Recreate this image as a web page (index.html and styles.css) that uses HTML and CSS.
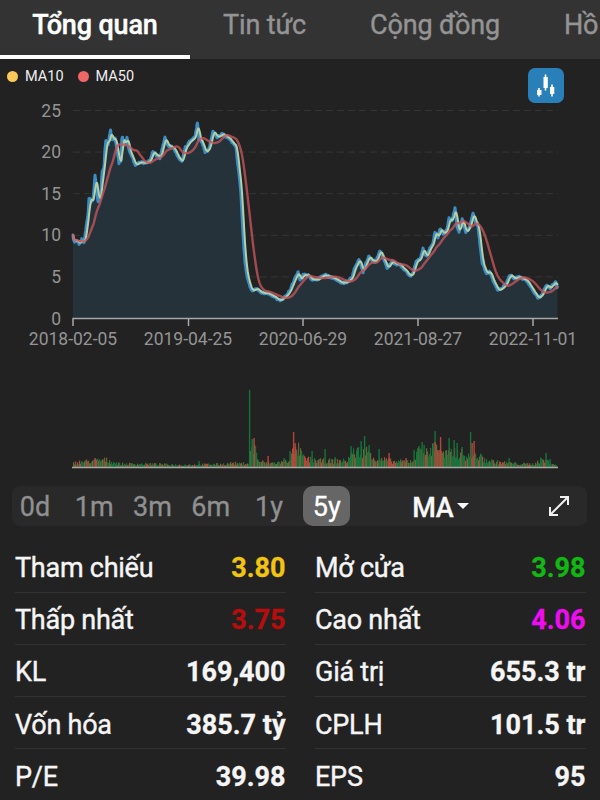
FILE: index.html
```
<!DOCTYPE html>
<html lang="vi">
<head>
<meta charset="utf-8">
<title>Tổng quan</title>
<link rel="stylesheet" href="styles.css">
</head>
<body>
<nav class="tabs">
  <a class="tab active">Tổng quan</a>
  <a class="tab">Tin tức</a>
  <a class="tab">Cộng đồng</a>
  <a class="tab last">Hồ</a>
</nav>
<section class="chart">
  <div class="legend">
    <span class="dot yellow"></span><span class="name">MA10</span>
    <span class="dot red"></span><span>MA50</span>
  </div>
  <button class="candles" aria-label="Candles">
    <svg width="35" height="35" viewBox="0 0 35 35" fill="#fff">
      <path d="M9 22h1.200v-2h1.600v2h1.700v5h-1.700v1.500h-1.600v-1.500h-1.200zM15.500 9h1.200v-2.500h1.600v2.500h1.500v11h-1.500v2.500h-1.600v-2.500h-1.200zM22 19h1.200v-2.500h1.600v2.500h1.500v7h-1.500v2.500h-1.600v-2.500h-1.200z"/>
    </svg>
  </button>
  <svg class="plot" width="600" height="422" viewBox="0 58 600 422">
    <g id="grid"></g>
    <g id="price"></g>
    <g id="volume"></g>
  </svg>
</section>
<div class="ranges">
  <span class="range">0d</span><span class="range">1m</span><span class="range">3m</span><span class="range">6m</span><span class="range">1y</span><span class="range selected">5y</span>
  <span class="indicator">MA<i class="caret"></i></span>
  <svg class="expand" width="22" height="22" viewBox="0 0 22 22" fill="none" stroke="#f0f0f0" stroke-width="2">
    <path d="M2 20L20 2M12 2h8v8M2 12v8h8"/>
  </svg>
</div>
<main class="stats">
  <div class="row"><span>Tham chiếu</span><b class="ref">3.80</b></div>
  <div class="row"><span>Mở cửa</span><b class="up">3.98</b></div>
  <div class="row"><span>Thấp nhất</span><b class="down">3.75</b></div>
  <div class="row"><span>Cao nhất</span><b class="ceil">4.06</b></div>
  <div class="row"><span>KL</span><b>169,400</b></div>
  <div class="row"><span>Giá trị</span><b>655.3 tr</b></div>
  <div class="row"><span>Vốn hóa</span><b>385.7 tỷ</b></div>
  <div class="row"><span>CPLH</span><b>101.5 tr</b></div>
  <div class="row"><span>P/E</span><b>39.98</b></div>
  <div class="row"><span>EPS</span><b>95</b></div>
</main>
<script src="chart.js"></script>
</body>
</html>
```
FILE: styles.css
```
* { box-sizing: border-box; }
body {
  margin: 0;
  width: 600px;
  height: 800px;
  overflow: hidden;
  background: #222;
  color: #f5f5f5;
  font-family: Roboto, "Liberation Sans", sans-serif;
}
.tabs {
  display: flex;
  height: 59px;
  background: #333;
  overflow: hidden;
}
.tab {
  flex: none;
  width: 190px;
  height: 59px;
  padding-top: 9px;
  text-align: center;
  font-size: 27px;
  line-height: 32px;
  letter-spacing: -0.15px;
  color: #949494;
  -webkit-text-stroke: 0.4px;
  white-space: nowrap;
}
.tab:nth-child(2) { width: 149px; }
.tab:nth-child(3) { width: 192px; }
.tab.last { width: 69px; padding-left: 33px; text-align: left; }
.tab.active {
  color: #fff;
  font-weight: 500;
  border-bottom: 4px solid #fff;
}
.chart { position: relative; height: 428px; }
.legend {
  position: absolute;
  left: 7px;
  top: 8px;
  display: flex;
  align-items: center;
  height: 20px;
  font-size: 14.5px;
  color: #eee;
}
.dot { width: 11px; height: 11px; border-radius: 50%; margin-right: 7px; }
.name { margin-right: 14px; }
.yellow { background: #fac858; }
.red { background: #ee6666; }
.candles {
  position: absolute;
  left: 528px;
  top: 10px;
  width: 36px;
  height: 35px;
  padding: 0;
  border: 0;
  border-radius: 7px;
  background: #2980b9;
}
.candles svg { display: block; }
.plot { display: block; margin-top: -1px; }
.grid-line { stroke: #343434; stroke-dasharray: 7 4; }
.axis { stroke: #a8a8a8; stroke-width: 1.5; fill: none; }
.label { fill: #949494; font-size: 17.5px; }
.date { text-anchor: middle; }
.value { text-anchor: end; }
.area { fill: #26323a; }
.line { fill: none; stroke-linejoin: round; stroke-linecap: round; }
.close { stroke: #3b8dc2; stroke-width: 3; }
.ma10 { stroke: #b3cfa8; stroke-width: 2; }
.ma50 { stroke: #c4555b; stroke-width: 2.4; opacity: .8; }
.bar-up { fill: #15733b; }
.bar-down { fill: #b8443b; }
.bar-mix { fill: #6b6338; }
.ranges {
  display: flex;
  align-items: center;
  width: 575px;
  height: 40px;
  margin: 0 0 0 12px;
  border-radius: 8px;
  background: #292929;
  font-size: 27px;
  color: #909090;
  -webkit-text-stroke: 0.3px;
}
.range { width: 58.300px; height: 40px; text-align: center; line-height: 43px; }
.range:first-child { width: 53px; padding-right: 7px; }
.range.selected {
  width: 47px;
  margin-left: 5px;
  border-radius: 10px;
  background: #666;
  color: #fff;
}
.indicator { display: flex; align-items: center; height: 40px; padding-top: 3px; margin-left: 62px; color: #f8f8f8; font-weight: 500; letter-spacing: -0.3px; }
.caret { margin: -3px 0 0 4px; border: 6px solid transparent; border-top-color: #f8f8f8; border-bottom: 0; }
.expand { margin-left: auto; margin-right: 17px; }
.stats {
  display: grid;
  grid-template-columns: 271px 271px;
  column-gap: 29px;
  margin: 14.500px 0 0 15px;
}
.row {
  display: flex;
  justify-content: space-between;
  align-items: center;
  height: 52.200px;
  padding-top: 4px;
  border-bottom: 1.500px solid #323232;
  font-size: 27px;
  white-space: nowrap;
}
.row span { letter-spacing: -0.25px; -webkit-text-stroke: 0.4px; }
.row b { font-weight: 700; -webkit-text-stroke: 0.3px; margin-right: 0.5px; }
.ref { color: #f1c40f; }
.up { color: #12b812; }
.down { color: #b80d0d; }
.ceil { color: #f00cf0; }
```
FILE: chart.js
```
const add = (parent, tag, attrs, text) => {
  const el = document.createElementNS('http://www.w3.org/2000/svg', tag);
  for (const k in attrs) el.setAttribute(k, attrs[k]);
  if (text) el.textContent = text;
  document.getElementById(parent).appendChild(el);
};
let seed = 7;
const random = () => (seed = (seed * 16807) % 2147483647) / 2147483647;
const interpolate = (points, x) => {
  let i = 1;
  while (i < points.length - 1 && points[i][0] < x) i++;
  const [a, b] = points[i - 1], [c, d] = points[i];
  return b + (d - b) * (x - a) / (c - a);
};
const parse = s => s.trim().split(/\s+/).map(p => p.split(',').map(Number));

[25, 20, 15, 10, 5, 0].forEach((v, i) => {
  const y = 110.5 + i * 41.6;
  if (v) add('grid', 'path', { d: `M73 ${y}H558`, class: 'grid-line' });
  add('grid', 'text', { x: 61, y: y + 6, class: 'label value' }, String(v));
});
['2018-02-05', '2019-04-25', '2020-06-29', '2021-08-27', '2022-11-01'].forEach((d, i) => {
  add('grid', 'text', { x: 73 + i * 115, y: 345, class: 'label date' }, d);
});

const closes = parse(`73,236 74,242 77,240 79,244 82,239 84,243 86,228 88,215 89,198 91,201 93,200
 95,176 97,190 98,203 101,190 102,172 104,168 105,148 106,140 108,145 110.5,130 112,139 115,139 117,149
 119,163 121,160 122,136 125,145 127,137 129,150 132,156 135,165 140,162 145,163 150,161 153,151
 157,156 160,158 163,145 165,138 168,146 172,147 176,152 179,159 182,161 185,148 190,141 195,137
 197.500,122 199,139 202,142 205,152 208,150 210,145 213,131 217,137 222,134 227,137 232,142 236,146
 237,158 239,174 241,195 243,235 245,262 247,276 249,284 252,291 256,288 262,293 267,293 273,296
 280,301 286,296 290,290 295,278 298,272 300,280 303,275 308,275 312,280 318,279 325,275 330,277
 336,279 342,283 348,282 352,277 354,270 357,264 359,259 363,272 365,265 369,256 372,261 376,261
 380,251 384,260 387,268 392,262 396,264 400,265 405,270 410,276 413,273 416,262 420,259 423,249
 426,257 429,250 433,243 435,232 438,238 440,228 443,234 447,230 449,218 452,221 455,208 457,226
 459,232 462,219 466,233 470,225 473,213 475,221 478,226 480,245 482,262 486,273 490,272 494,283
 498,290 502,288 506,284 510,275 514,278 520,277 527,281 532,289 538,298 542,295 546,285 550,288
 553,284 556,282 557,287`);
const days = [];
for (let x = 73; x <= 557.5; x += 0.4) {
  days.push([x, interpolate(closes, Math.min(x, 557)) + (random() - 0.5) * 2]);
}
const average = n => days.map(([x], i) => {
  const part = days.slice(Math.max(0, i - n + 1), i + 1);
  return [x, part.reduce((s, p) => s + p[1], 0) / part.length];
});
const path = pts => 'M' + pts.map(p => p[0].toFixed(1) + ' ' + p[1].toFixed(1)).join('L');
add('price', 'path', { d: path(days) + 'V318H73Z', class: 'area' });
for (let i = 0; i < 5; i++) {
  add('price', 'path', { d: `M73 ${110.5 + i * 41.6}H558`, class: 'grid-line', opacity: 0.35 });
}
add('price', 'path', { d: path(days), class: 'line close' });
add('price', 'path', { d: path(average(8)), class: 'line ma10' });
add('price', 'path', { d: path(average(40)), class: 'line ma50' });
add('price', 'path', { d: 'M73 326V318.5H558M188.5 318v8M303 318v8M418 318v8M533 318v8', class: 'axis' });

const envelope = parse(`73,4 80,5 94,6 105,7 112,5 120,3 150,3 180,2 225,3 232,4 240,3 245,4 249,3
 251,22 254,20 258,6 265,4 275,4 288,6 291,14 298,17 304,8 320,6 340,6 347,6 350,13 362,16 371,14
 375,7 385,7 395,5 412,6 420,18 428,12 434,22 444,12 455,15 470,9 476,12 484,7 495,5 520,3 533,3
 541,7 549,5 557,1`);
for (let x = 73; x < 557; x += 1) {
  const h = interpolate(envelope, x) * (0.55 + random() * 0.9);
  const r = random();
  const type = r < 0.45 ? 'bar-up' : r < 0.65 ? 'bar-down' : 'bar-mix';
  add('volume', 'rect', { x, y: 467 - h, width: 1.2, height: h, class: type });
}
const spikes = `95,9,d 199,6,u 249.5,77,u 252,28,u 254,29,d 268,11,d 284,9,u 290,16,u 293.500,35,d
 295,24,d 298,14,u 303,12,u 312,16,u 325,18,u 335,10,u 351,21,u 357,18,u 361,26,u 364.5,31,u 369,22,u
 379,18,u 389,14,d 406,9,d 414,17,u 419,21,u 422,25,u 424,22,u 433,24,u 435,36,u 435,25,d 439,17,d
 440.5,30,d 449,29,u 454,27,u 457,24,u 462,20,u 470.5,35,u 472,24,d 474,26,d 481,12,u 509,9,u 541,9,u
 546,14,u 550,8,u`;
spikes.trim().split(/\s+/).forEach(s => {
  const [x, h, t] = s.split(',');
  add('volume', 'rect', { x: x - 0.6, y: 467 - h, width: 1.4, height: h, class: t === 'u' ? 'bar-up' : 'bar-down' });
});
add('volume', 'path', { d: 'M72 467.5H558', class: 'axis' });
```
